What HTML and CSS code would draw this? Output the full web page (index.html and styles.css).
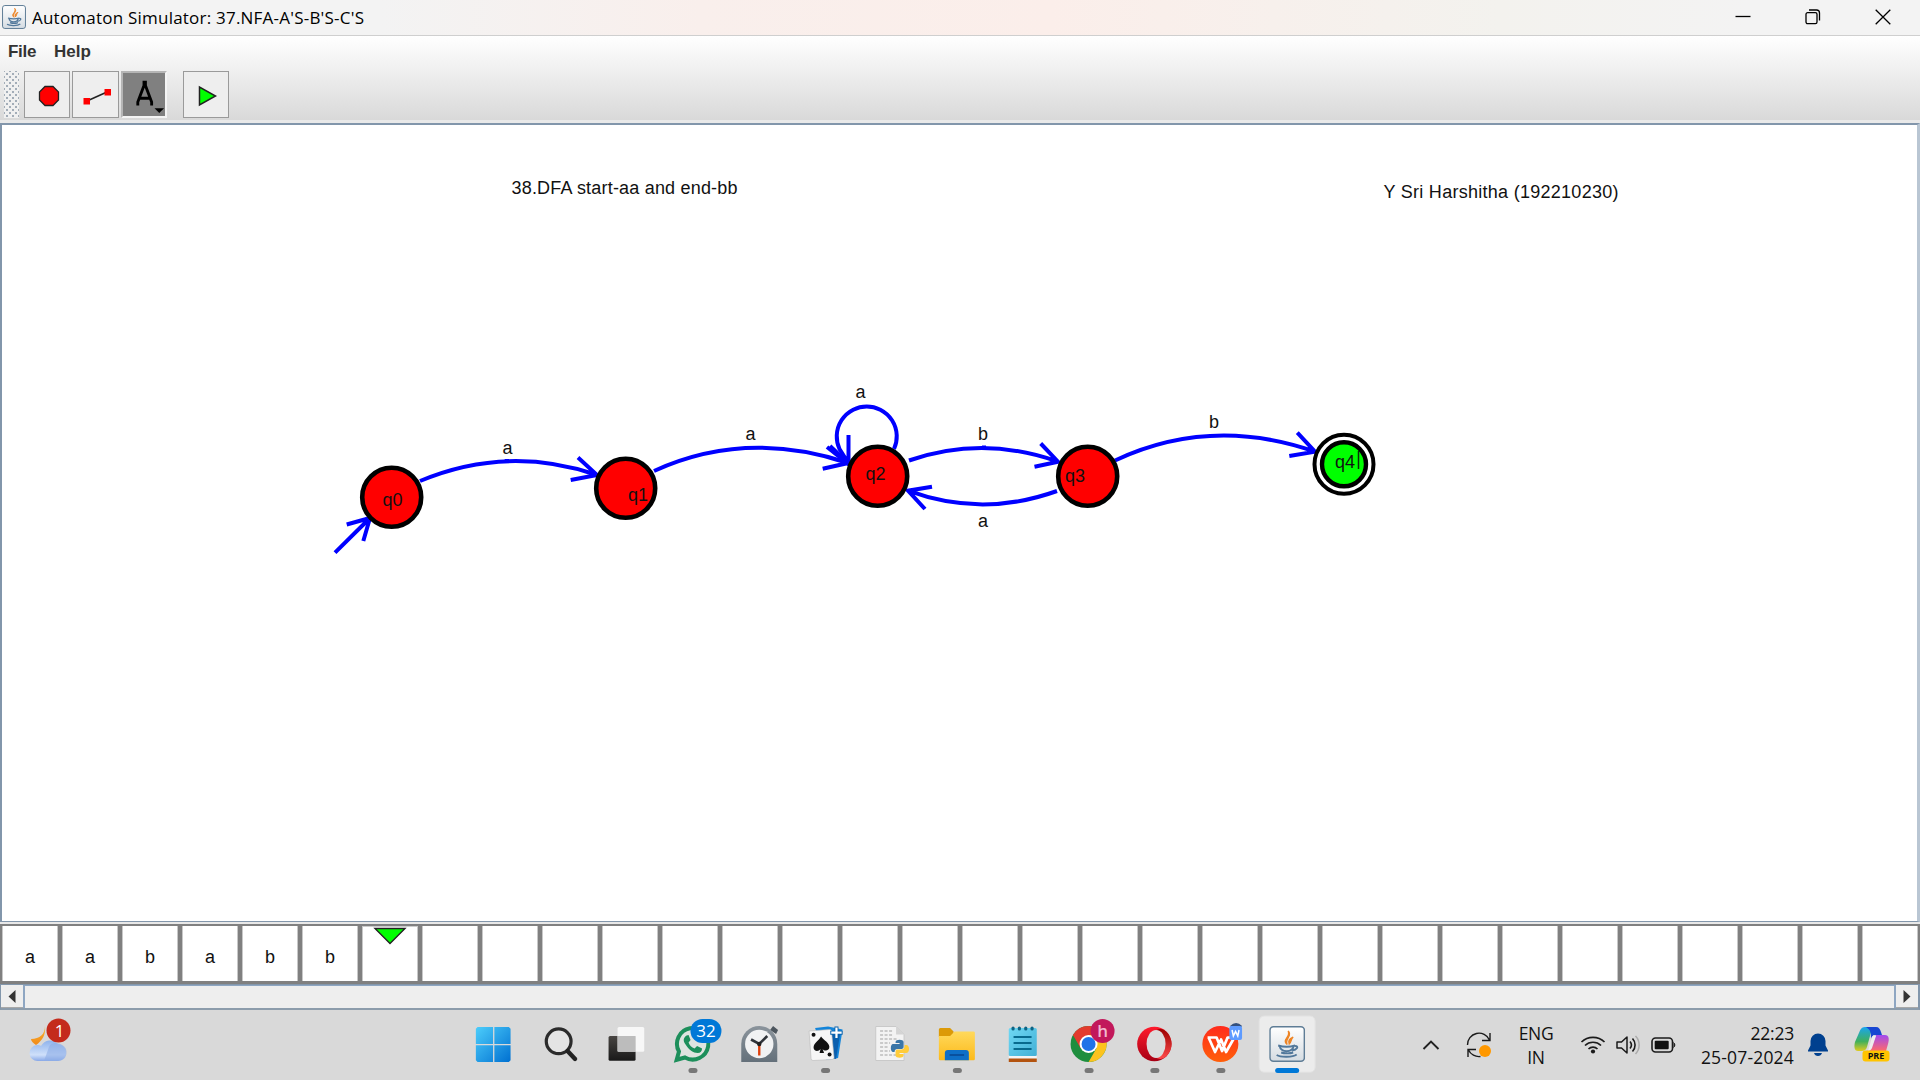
FILE: index.html
```html
<!DOCTYPE html>
<html lang="en">
<head>
<meta charset="utf-8">
<title>Automaton Simulator</title>
<link rel="stylesheet" href="styles.css">
</head>
<body>
<div class="desktop">
  <header class="titlebar">
    <svg class="app-icon" viewBox="0 0 36 36"><use href="#java"/></svg>
    <h1 class="title">Automaton Simulator: 37.NFA-A'S-B'S-C'S</h1>
    <div class="win-controls">
      <svg width="16" height="16" viewBox="0 0 16 16"><path d="M0.5 7.5h15"/></svg>
      <svg width="16" height="16" viewBox="0 0 16 16"><rect x="1" y="3.700" width="11" height="11" rx="1.600"/><path d="M4 1h7.500a3 3 0 0 1 3 3v7.500"/></svg>
      <svg width="16" height="16" viewBox="0 0 16 16"><path d="M0.700 0.700l14.600 14.600M15.300 0.700L0.700 15.300"/></svg>
    </div>
  </header>

  <div class="chrome">
    <nav class="menu"><span class="menu-file">File</span><span class="menu-help">Help</span></nav>
    <div class="toolbar">
      <div class="grip"></div>
      <div class="tool"><svg viewBox="0 0 44 44"><path d="M20 14.500h8l5.500 5.500v8l-5.500 5.500h-8l-5.500-5.500v-8z" fill="#f00" stroke="#222" stroke-width="1.300"/></svg></div>
      <div class="tool"><svg viewBox="0 0 44 44"><path d="M14 29L34 20" stroke="#222" stroke-width="1.500"/><path d="M10.500 26h6.500v6.500h-6.500zM31.500 17h6.500v6.500h-6.500z" fill="#f00"/></svg></div>
      <div class="tool active"><svg viewBox="0 0 44 44"><path d="M15.500 34v-3.500L22 13V9.500h1.500V13L30 30.500V34M18 26.500h10" fill="none" stroke="#000" stroke-width="3"/><path d="M33 37h10l-5 5z" fill="#000"/></svg></div>
      <div class="tool run"><svg viewBox="0 0 44 44"><path d="M15.500 15v18L31.500 24z" fill="#0f0" stroke="#222" stroke-width="1.500"/></svg></div>
    </div>
  </div>

  <main class="canvas">
    <svg width="1914" height="796" viewBox="2 125 1914 796">
      <g class="edge">
        <path d="M335 552.700L370 518M346.700 524.500L370 518L363.300 541"/>
        <path d="M420 481Q507 444.500 597 475M578 457.500L597 475L570.700 480M506.700 461v-2"/>
        <path d="M654 471Q746 429 848 463M830 446L848 463L822.700 468.700"/>
        <path d="M894 449A30 30 0 1 0 839.500 449L849 464M848.500 435V464L827 447"/>
        <path d="M909 460.500Q983 435 1058 461.700M1040.700 443.500L1058 461.700L1034.500 466.700M984 448v-2.500"/>
        <path d="M1057 491Q982 518 908 490.700M932 486.700L908 490.700L925 509"/>
        <path d="M1115 460.500Q1211 415.500 1315 451.700M1297.300 432.700L1315 451.700L1289.300 456"/>
      </g>
      <g class="state">
        <circle cx="391.700" cy="497.300" r="29.500"/>
        <circle cx="625.700" cy="488.300" r="29.500"/>
        <circle cx="877.700" cy="476.300" r="29.500"/>
        <circle cx="1087.700" cy="476.300" r="29.500"/>
        <circle class="ring" cx="1344" cy="464.300" r="29.500"/>
        <circle class="current" cx="1344" cy="464.300" r="22"/>
      </g>
      <g class="label">
        <text x="511.500" y="194" textLength="226">38.DFA start-aa and end-bb</text>
        <text x="1383.500" y="198" textLength="235">Y Sri Harshitha (192210230)</text>
        <text x="502.500" y="453.500">a</text>
        <text x="745.500" y="439.500">a</text>
        <text x="855.500" y="398">a</text>
        <text x="978" y="440">b</text>
        <text x="978" y="527">a</text>
        <text x="1209" y="428">b</text>
        <text x="382.500" y="506">q0</text>
        <text x="628" y="500.500">q1</text>
        <text x="865.500" y="479.500">q2</text>
        <text x="1065" y="482">q3</text>
        <text x="1335" y="467.500">q4</text>
      </g>
      <path d="M1358.500 451v18" stroke="#063006" stroke-width="1.500"/>
    </svg>
  </main>

  <section class="tape">
    <div class="cell">a</div><div class="cell">a</div><div class="cell">b</div><div class="cell">a</div><div class="cell">b</div><div class="cell">b</div>
    <div class="cell head"><svg width="34" height="18" viewBox="0 0 34 18"><path d="M2 1.500h30L17 16.500z" fill="#0f0" stroke="#222" stroke-width="1.400"/></svg></div>
    <div class="cell"></div><div class="cell"></div><div class="cell"></div><div class="cell"></div><div class="cell"></div><div class="cell"></div><div class="cell"></div><div class="cell"></div><div class="cell"></div><div class="cell"></div><div class="cell"></div><div class="cell"></div><div class="cell"></div><div class="cell"></div><div class="cell"></div><div class="cell"></div><div class="cell"></div><div class="cell"></div><div class="cell"></div><div class="cell"></div><div class="cell"></div><div class="cell"></div><div class="cell"></div><div class="cell"></div><div class="cell"></div>
  </section>
  <div class="scrollbar">
    <div class="arrow"><svg width="8" height="13" viewBox="0 0 8 13"><path d="M7.500 0v13L0.500 6.500z" fill="#333"/></svg></div>
    <div class="track"></div>
    <div class="arrow"><svg width="8" height="13" viewBox="0 0 8 13"><path d="M0.500 0v13L7.500 6.500z" fill="#333"/></svg></div>
  </div>

  <footer class="taskbar">
    <div class="weather">
      <svg width="66" height="70" viewBox="0 0 66 70">
        <path d="M45 16c1 9-3 15-9 19-3-2-5-4-5-6 9 0 14-5 14-13z" fill="url(#moon)"/>
        <path d="M38 51a8 8 0 0 1-1-16c2 0 3 0 4 1a10.500 10.500 0 0 1 17-2 9 9 0 0 1 8 8 8 8 0 0 1-8 9z" fill="url(#cloud)"/>
        <path d="M49 37c2-6 13-5 17 2 2 7-2 12-8 12H44z" fill="#8daee6" opacity=".6"/>
        <circle cx="58.500" cy="20.500" r="12" fill="#c42b1c"/>
        <text x="59.500" y="26.500" class="badge-text">1</text>
      </svg>
    </div>
    <div class="apps">
      <svg class="app" viewBox="0 0 66 70"><path d="M17.500 17h15.500v17H15.800V18.700zM34.300 17h14.500l1.700 1.700V34H34.300zM15.800 35.300H33V52H17.500l-1.700-1.700zM34.300 35.300h16.200v15L48.800 52H34.300z" fill="url(#win)"/></svg>
      <svg class="app" viewBox="0 0 66 70"><circle cx="32.600" cy="31.300" r="12.400" fill="#e4e4e4" stroke="#2b2b2b" stroke-width="3.200"/><path d="M41.500 41L49 49" stroke="#222" stroke-width="4.400" stroke-linecap="round"/></svg>
      <svg class="app" viewBox="0 0 66 70"><rect x="16.500" y="26" width="27" height="24.700" rx="1.500" fill="url(#dark)"/><rect x="25.500" y="17" width="26.700" height="24.700" rx="1.500" fill="#fafafa" opacity=".88"/><path d="M25.500 26h18v15.700h-18z" fill="#bcbcbc"/></svg>
      <svg class="app" viewBox="0 0 66 70"><path d="M18.600 49.800l2.300-8.300a15.700 15.700 0 1 1 6 6z" fill="#dfe4e0" stroke="#1d8f5b" stroke-width="4"/><path d="M28.500 25.500c-3 2-4 5-1 9 3 5 8 8.500 12 8.500 3 0 4.500-2 4.500-4.500l-5-2.500-2.500 2.500c-3-1-5-3-6-6l2-2.500-2-5z" fill="#1d8f5b"/><rect x="32.400" y="9" width="31" height="24" rx="12" fill="#0078d7"/><text x="48" y="27" class="badge-text">32</text><rect x="30.400" y="58" width="9" height="5" rx="2.500" fill="#777"/></svg>
      <svg class="app" viewBox="0 0 66 70"><path d="M45 20l3-4 5 4-2 4z" fill="#4d565e"/><path d="M16.200 52V34a18 18 0 0 1 36 0v18z" fill="url(#steel)"/><circle cx="34.200" cy="34" r="14.200" fill="#f1f2f3"/><path d="M26 29.500l8.200 4.500 8-8" fill="none" stroke="#30343a" stroke-width="2.600"/><path d="M34.200 35v10.500" stroke="#e0400c" stroke-width="2.400"/><circle cx="34.200" cy="34" r="2.200" fill="#222"/></svg>
      <svg class="app" viewBox="0 0 66 70"><path d="M24 18l13-1.500 14.500 3L47 48l-12 2z" fill="#1284da"/><path d="M37 22l12 2-4 25-8-2z" fill="#0a5fae"/><path d="M18 21l20.500-1.500a2 2 0 0 1 2 2L43 47.500a2 2 0 0 1-2 2L22 50.500a2 2 0 0 1-2-2z" fill="#f6f6f6" stroke="#b8b8b8" stroke-width=".6"/><path d="M30 26.500c3 4 8 6 8.300 10.300.2 4-4.800 5-6.800 2.200l1.500 4h-4.500l1-4c-2 3-7 2.500-7-1.500 0-4.500 5-6.500 7.500-11z" fill="#111"/><circle cx="22.500" cy="24.800" r="2" fill="#111"/><circle cx="38.500" cy="44.500" r="2" fill="#111"/><path d="M45.400 16.500v12.500M39.200 22.700h12.400" stroke="#0b63ad" stroke-width="4"/><path d="M45.400 17.500v10.500M40.200 22.700h10.400" stroke="#fff" stroke-width="2.200"/><rect x="30" y="58" width="9" height="5" rx="2.500" fill="#777"/></svg>
      <svg class="app" viewBox="0 0 66 70"><path d="M18.700 16.500H39l8 8v26H18.700z" fill="#f3f3f3" stroke="#c9c9c9"/><path d="M39 16.500l8 8h-8z" fill="#d4d4d4"/><path d="M23 21h13M23 25h13M23 29h18M23 33h10M23 37h9M23 41h10M23 45h17" stroke="#bdbdbd" stroke-width="1.400" stroke-dasharray="3 1.500"/><path d="M38.500 32c0-3 8-3 8 0v4.500c0 2-1 2.500-3 2.500h-3c-2 0-3 1-3 3h-1.500c-3 0-3-8 0-8h6.500v-1h-4z" fill="#3a76a8"/><path d="M47.500 34h1.500c4 0 4 8 0 8h-6.500v1h4v1.500c0 3-8 3-8 0V40.500c0-1.500 1-2 2.500-2h3c2 0 3.500-1 3.500-3z" fill="#ffcc3a" transform="translate(0 1)"/></svg>
      <svg class="app" viewBox="0 0 66 70"><path d="M15.800 19.500A1.500 1.500 0 0 1 17.300 18H27l3.500 3.500V27H15.800z" fill="#dc9a08"/><path d="M15.800 26H27l4.500-4.500h19a1.300 1.300 0 0 1 1.300 1.300v26.200a1.300 1.300 0 0 1-1.300 1.300H17.100a1.300 1.300 0 0 1-1.300-1.300z" fill="url(#folder)"/><path d="M21.800 50.300V43a3 3 0 0 1 3-3h18a3 3 0 0 1 3 3v7.300z" fill="#0e6fc7"/><path d="M26.500 45h14.500" stroke="#0a4a94" stroke-width="1.600"/><rect x="29.800" y="58" width="9" height="5" rx="2.500" fill="#777"/></svg>
      <svg class="app" viewBox="0 0 66 70"><rect x="19.700" y="18" width="28" height="28" rx="1.500" fill="url(#note)"/><path d="M19.700 46h28v3h-28z" fill="#f4f4f4"/><path d="M19.700 48.500h28V52h-28z" fill="#b3530f"/><path d="M24 18v1M30.300 18v1M36.700 18v1M43 18v1" stroke="#0e6484" stroke-width="3.200" stroke-linecap="round"/><path d="M24.500 27h18M24.500 33h18M24.500 39h18" stroke="#086a8e" stroke-width="1.900"/></svg>
      <svg class="app" viewBox="0 0 66 70"><circle cx="33.500" cy="34" r="18" fill="#1e8e3e"/><path d="M17.900 25A18 18 0 0 1 49.100 25H33.500L25.700 38.500z" fill="#e33b2e"/><path d="M33.500 25h15.600A18 18 0 0 1 33.500 52l7.800-13.500z" fill="#fcc31e"/><circle cx="33.500" cy="34" r="9" fill="#fff"/><circle cx="33.500" cy="34" r="7" fill="#1f73e8"/><circle cx="47.500" cy="21" r="12" fill="#c2185b"/><text x="47.500" y="27" class="badge-text faint">h</text><rect x="29.500" y="58" width="9" height="5" rx="2.500" fill="#777"/></svg>
      <svg class="app" viewBox="0 0 66 70"><circle cx="33.300" cy="34" r="17.200" fill="url(#opera)"/><path d="M35 20.500c7-5 15.500 4 15.500 13.500S42 52.500 35 47.500c12-3 12-24 0-27z" fill="url(#opera2)"/><ellipse cx="35" cy="34" rx="9.500" ry="14" fill="#dcdcdc"/><rect x="29.300" y="58" width="9" height="5" rx="2.500" fill="#777"/></svg>
      <svg class="app" viewBox="0 0 66 70"><circle cx="33.300" cy="34" r="18" fill="url(#wps)"/><path d="M20.500 27.500h9L35 41l5.500-13.500H47M21.500 27.500L28 42l6-12.500L39 42l8-14" fill="none" stroke="#fff" stroke-width="2.700" stroke-linejoin="round"/><path d="M44 17q5-5 10 0" stroke="#33507e" stroke-width="3" fill="none"/><rect x="42.300" y="16" width="12.700" height="14" rx="2" fill="#5e9bff"/><path d="M45 20l1.300 6 2.200-4.500 2.200 4.500 1.300-6" stroke="#fff" stroke-width="1.500" fill="none"/><rect x="29.300" y="58" width="9" height="5" rx="2.500" fill="#777"/></svg>
      <svg class="app" viewBox="0 0 66 70"><rect x="5.100" y="6" width="56" height="56.300" rx="5" fill="#ececec" stroke="#e2e2e2"/><svg x="15.100" y="16" width="36" height="36" viewBox="0 0 36 36"><use href="#java"/></svg><rect x="21.100" y="58" width="24" height="5" rx="2.500" fill="#0078d7"/></svg>
    </div>
    <div class="tray">
      <svg class="chevron" width="18" height="12" viewBox="0 0 18 12"><path d="M1.500 10L9 2.500 16.500 10" fill="none" stroke="#222" stroke-width="1.900"/></svg>
      <svg class="sync" width="26" height="28" viewBox="0 0 26 28"><path d="M1.500 14A11.500 11.500 0 0 1 23.500 9M24 2v7.500h-8M2 26v-7.500h8M2.500 19a11.500 11.500 0 0 0 12 6.500" fill="none" stroke="#1b1b1b" stroke-width="1.400"/><circle cx="19" cy="20" r="6" fill="#ff9800"/></svg>
      <div class="lang"><span>ENG</span><span>IN</span></div>
      <svg class="wifi" width="26" height="20" viewBox="0 0 26 20"><path d="M1.500 7a16.500 16.500 0 0 1 23 0M5 10.500a11.500 11.500 0 0 1 16 0M8.500 14a6.500 6.500 0 0 1 9 0" fill="none" stroke="#1b1b1b" stroke-width="1.700"/><circle cx="13" cy="16.500" r="2.100" fill="#1b1b1b"/></svg>
      <svg class="volume" width="26" height="20" viewBox="0 0 26 20"><path d="M1 7h4.500L11 2v16l-5.500-5H1z" fill="none" stroke="#1b1b1b" stroke-width="1.500" stroke-linejoin="round"/><path d="M14 6.500a5.500 5.500 0 0 1 0 7M16.500 3.500a9.500 9.500 0 0 1 0 13" fill="none" stroke="#1b1b1b" stroke-width="1.600"/><path d="M19.500 1a13 13 0 0 1 0 18" fill="none" stroke="#aaa" stroke-width="1.500"/></svg>
      <svg class="battery" width="26" height="16" viewBox="0 0 26 16"><rect x="1" y="1" width="20.500" height="14" rx="3.500" fill="none" stroke="#1b1b1b" stroke-width="1.600"/><rect x="3.700" y="3.700" width="14" height="8.600" rx="1" fill="#111"/><path d="M22.500 5.500a3 3 0 0 1 0 5" fill="#1b1b1b" stroke="#1b1b1b"/></svg>
      <div class="clock"><span>22:23</span><span class="date">25-07-2024</span></div>
      <svg class="bell" width="20" height="24" viewBox="0 0 20 24"><path d="M0 18.500v-1l2.500-5V8a7.500 7.500 0 0 1 15 0v4.500l2.500 5v1zM6 20h8a4.200 4.200 0 0 1-8 0z" fill="#00408f"/></svg>
      <svg class="copilot" width="36" height="35" viewBox="0 0 36 35"><path d="M1 15L6 3.500C7 1 9 0 11 0h11c-4 2-5 5-6 9l-3 11c-1 3-3 4-5 4H4c-4 0-4-5-3-9z" fill="url(#cop1)"/><path d="M12 0h10c3 0 4 2 5 5l1 3h-5c-4 0-5 1-6 4 0-6 0-9-5-12z" fill="#1746d2"/><path d="M22 8h9c4 0 4.500 4 3 9l-2 7H12c3 0 5-2 6-6z" fill="url(#cop2)"/><path d="M22 9l-4 12c-1 2-2 3-4 3l4-14c1-2 2-2 4-1z" fill="#eee"/><rect x="8.500" y="23.500" width="27" height="11" rx="3" fill="#ffc400"/><text x="22" y="32.300" class="pre">PRE</text></svg>
    </div>
  </footer>
</div>

<svg class="defs" width="0" height="0">
  <defs>
    <linearGradient id="win" x1="0" y1="0" x2="1" y2="1"><stop offset="0" stop-color="#4ccdfb"/><stop offset="1" stop-color="#0070d1"/></linearGradient>
    <linearGradient id="dark" x2="0" y2="1"><stop offset="0" stop-color="#484542"/><stop offset="1" stop-color="#191919"/></linearGradient>
    <linearGradient id="steel" x2="0" y2="1"><stop offset="0" stop-color="#8b949c"/><stop offset="1" stop-color="#64707a"/></linearGradient>
    <linearGradient id="folder" x2="0" y2="1"><stop offset="0" stop-color="#ffd95c"/><stop offset="1" stop-color="#fcba1b"/></linearGradient>
    <linearGradient id="note" x2="1" y2="1"><stop offset="0" stop-color="#6fd8f4"/><stop offset="1" stop-color="#42b0d6"/></linearGradient>
    <linearGradient id="opera" x2="0" y2="1"><stop offset="0" stop-color="#ff1b2d"/><stop offset="1" stop-color="#a70014"/></linearGradient>
    <linearGradient id="opera2" x2="0" y2="1"><stop offset="0" stop-color="#9c0000"/><stop offset="1" stop-color="#ff4b4b"/></linearGradient>
    <linearGradient id="wps" x2="0" y2="1"><stop offset="0" stop-color="#ff2b1c"/><stop offset="1" stop-color="#ff5f0a"/></linearGradient>
    <linearGradient id="moon" x2="0" y2="1"><stop offset="0" stop-color="#f8b62d"/><stop offset="1" stop-color="#f28a1a"/></linearGradient>
    <linearGradient id="cloud" x2="0" y2="1"><stop offset="0" stop-color="#8fb3ec"/><stop offset=".7" stop-color="#cfe0fa"/><stop offset="1" stop-color="#88a8e8"/></linearGradient>
    <linearGradient id="cop1" x2="0" y2="1"><stop offset="0" stop-color="#19a5ee"/><stop offset=".6" stop-color="#40b05c"/><stop offset="1" stop-color="#e0cb20"/></linearGradient>
    <linearGradient id="cop2" x2="0" y2="1"><stop offset="0" stop-color="#a04af0"/><stop offset="1" stop-color="#ff6a6a"/></linearGradient>
    <linearGradient id="tile" x2="0" y2="1"><stop offset="0" stop-color="#fff"/><stop offset="1" stop-color="#d5dce2"/></linearGradient>
    <symbol id="java" viewBox="0 0 36 36">
      <rect x=".8" y=".8" width="34.400" height="34.400" rx="3.500" fill="url(#tile)" stroke="#5f7d96" stroke-width="1.500"/>
      <path d="M18 18.500c-6-5 4-7 1-13.500 5 5-4 7.500-1 13.500zM20 18c-1-4 0-5 4-7-3 3-1 4-4 7z" fill="#ee8424" stroke="#ee8424" stroke-width="1.300"/>
      <path d="M9 19.500c5 1.500 12 1.500 17 0M10.500 20c1 7 13 7 14 0M26 20c4 0 2 4-3 4.500M12 26.500c3 1.200 9 1.200 12 0M7.500 29c4 2.500 16 2.500 20-.5" fill="none" stroke="#52789b" stroke-width="1.900"/>
    </symbol>
  </defs>
</svg>
</body>
</html>
```

FILE: styles.css
```css
* { box-sizing: border-box; }
body { margin: 0; overflow: hidden; background: #d9d9d9; }
svg { display: block; }
.defs { position: absolute; }

.desktop {
  width: 1920px;
  height: 1080px;
  display: flex;
  flex-direction: column;
  font-family: "Liberation Sans", Arial, sans-serif;
  color: #111;
}

.titlebar {
  height: 35px;
  display: flex;
  align-items: center;
  padding: 0 29px 2px 2px;
  background: linear-gradient(90deg, #f3f3f3 0, #f3f3f3 380px, #f9efec 700px, #fbeeea 1050px, #f3f2ee 1500px, #f3f3f3 1750px);
}
.app-icon { width: 24px; height: 24px; }
.title {
  margin: 3px 0 0 6px;
  font: 400 17px/24px "Open Sans", "Noto Sans", sans-serif;
  letter-spacing: 0.22px;
  white-space: nowrap;
  color: #000;
}
.win-controls { margin-left: auto; display: flex; gap: 54px; }
.win-controls svg { fill: none; stroke: #000; stroke-width: 1.300; }

.chrome {
  height: 88px;
  border-top: 1px solid #cfcfcf;
  background: linear-gradient(#fff 0, #d9d9d9 84px, #e9e9e9 84px, #e9e9e9 100%);
}
.menu {
  display: flex;
  gap: 18px;
  height: 35px;
  padding: 5px 0 0 8px;
  font-weight: 700;
  font-size: 17px;
  line-height: 21px;
  color: #333;
}
.menu-file { width: 28px; letter-spacing: -0.3px; }
.menu-help { letter-spacing: 0; }
.toolbar { display: flex; gap: 2px; padding-left: 4px; }
.grip {
  width: 15px;
  height: 47px;
  margin-right: 3px;
  background:
    radial-gradient(circle, #a3adb8 0.9px, transparent 1.2px) 0 0 / 6px 6px,
    radial-gradient(circle, #a3adb8 0.9px, transparent 1.2px) 3px 3px / 6px 6px #f0f0f0;
}
.tool {
  width: 46.300px;
  height: 47px;
  border: 1px solid #9a9a9a;
  background: #eee;
}
.tool svg { width: 44px; height: 44px; }
.tool.active { background: #808080; border: 2px solid #b5b5b5; border-right-color: #f4f4f4; border-bottom-color: #f4f4f4; }
.tool.active svg { width: 42px; height: 42px; }
.run { margin-left: 14px; }

.canvas {
  height: 799px;
  border: 1px solid #8296ab;
  border-width: 2px 3px 1px 2px;
  border-right-color: #b9c6d3;
  background: #fff;
  overflow: hidden;
}
.edge path { fill: none; stroke: #00f; stroke-width: 4; }
.state circle { fill: #f00; stroke: #000; stroke-width: 4.600; }
.state .ring { fill: #fff; stroke-width: 4; }
.state .current { fill: #0f0; stroke-width: 4.400; }
.label text { font-family: "Liberation Sans", Arial, sans-serif; font-size: 18px; fill: #111; }

.tape {
  height: 62px;
  display: flex;
  gap: 4px;
  padding: 2px 0 3px 2px;
  border-top: 2px solid #e8e8e8;
  background: #808080;
  overflow: hidden;
}
.cell {
  flex: 0 0 56px;
  display: flex;
  justify-content: center;
  align-items: center;
  padding-top: 7px;
  background: #fff;
  border: 1px solid #c8c8c8;
  border-width: 0 1px;
  font-size: 18px;
}
.head { align-items: flex-start; padding-top: 0; border-top: 1px solid #ccc; }

.scrollbar {
  height: 26px;
  display: flex;
  border: 1px solid #8296ab;
  border-width: 1px 2px 2px 1px;
  border-bottom-color: #8c9cab;
  box-shadow: inset 0 -1px #a8a8a8;
  background: #eee;
}
.arrow { width: 22px; display: flex; align-items: center; justify-content: center; }
.track { flex: 1; border: 1px solid #8ea6c2; border-width: 1px 2px 0; background: #eee; }

.taskbar {
  height: 70px;
  display: flex;
  background: #d9d9d9;
  font-family: "Open Sans", "Noto Sans", sans-serif;
}
.weather { width: 460px; }
.weather svg { overflow: visible; }
.apps { width: 860px; display: flex; }
.app { flex: 0 0 66.140px; height: 70px; overflow: visible; }
.badge-text { font: 400 17px "Open Sans", sans-serif; fill: #fff; text-anchor: middle; }
.faint { fill: #f2b8d0; font-weight: 600; }
.tray { display: flex; align-items: center; width: 600px; padding: 0 0 1px 102px; font-size: 17.500px; line-height: 24px; }
.tray svg { flex: none; }
.sync { margin: 0 26px 0 26px; }
.lang, .clock { display: flex; flex-direction: column; flex: none; }
.lang { width: 36px; align-items: center; letter-spacing: -0.4px; }
.wifi { margin-left: 26px; }
.volume { margin-left: 10px; }
.battery { margin-left: 9px; }
.clock { width: 96px; margin-left: 21px; align-items: flex-end; letter-spacing: -0.2px; white-space: nowrap; }
.date { letter-spacing: 0.18px; }
.bell { margin-left: 14px; }
.copilot { margin-left: 26px; }
.pre { font: 700 9px "Open Sans", sans-serif; text-anchor: middle; fill: #111; }
```
